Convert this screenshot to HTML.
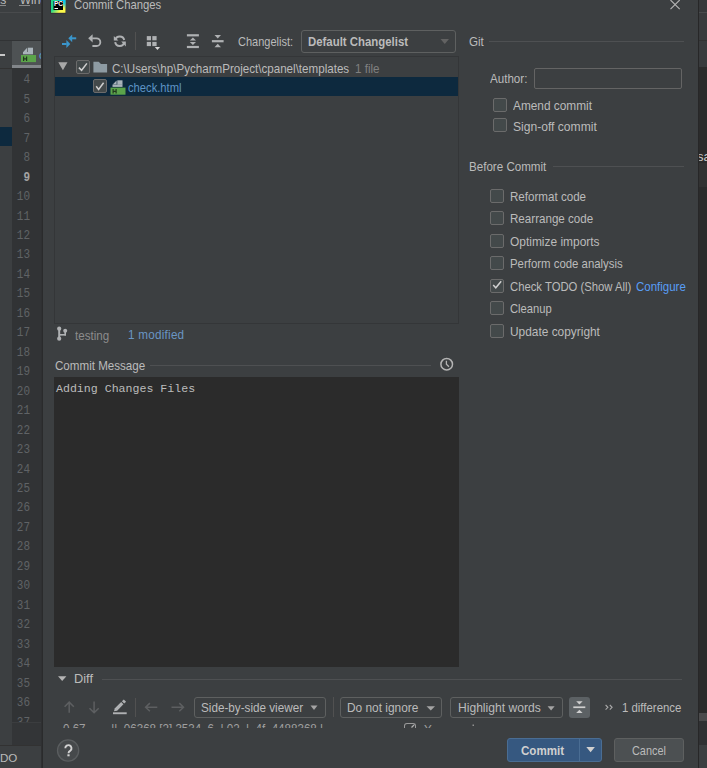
<!DOCTYPE html>
<html><head><meta charset="utf-8">
<style>
*{margin:0;padding:0;box-sizing:border-box}
html,body{width:707px;height:768px;overflow:hidden;background:#2b2b2b}
body{position:relative;font-family:"Liberation Sans",sans-serif;font-size:11.6px;color:#bbbbbb}
.a{position:absolute}
.t{position:absolute;white-space:pre;line-height:14px;font-size:11.6px}
.mono{font-family:"Liberation Mono",monospace}
.cb{position:absolute;width:14px;height:14px;border:1px solid #6b6b6b;border-radius:2px;background:#43494a}
.hl{position:absolute;height:1px;background:#4e5052}
.combo{position:absolute;border:1px solid #5e6060;border-radius:3px}
.ln{position:absolute;left:11px;width:19px;text-align:right;font-family:"Liberation Mono",monospace;font-size:11px;line-height:14px;color:#606366;white-space:pre;transform:scaleY(1.1);transform-origin:0 12px}
</style></head><body>

<!-- ===== IDE background left ===== -->
<div class="a" style="left:0;top:0;width:43px;height:12px;background:#3c3f41"></div>
<div class="a" style="left:0;top:12px;width:43px;height:1px;background:#494b4d"></div>
<div class="a" style="left:0;top:13px;width:43px;height:27px;background:#3c3f41"></div>
<div class="a" style="left:0;top:40px;width:43px;height:1px;background:#313335"></div>
<div class="a" style="left:0;top:41px;width:43px;height:681px;background:#3c3f41"></div>
<!-- tab -->
<div class="a" style="left:12px;top:41px;width:31px;height:27px;background:#4e5254"></div>
<div class="a" style="left:12px;top:64.5px;width:31px;height:3.5px;background:#82868a"></div>
<!-- gutter -->
<div class="a" style="left:12px;top:68px;width:31px;height:654px;background:#313335"></div>
<div class="a" style="left:0;top:127px;width:12px;height:19px;background:#0d293e"></div>
<div class="a" style="left:0;top:68px;width:12px;height:1px;background:#323232"></div>
<div class="a" style="left:0;top:54px;width:5px;height:2px;background:#c8c8c8"></div>

<!-- line numbers -->
<div class="a" style="left:12px;top:68px;width:31px;height:654px;overflow:hidden">
<div style="position:absolute;left:-12px;top:-68px;width:43px;height:800px">
<div class="ln" style="top:73.3px">4</div>
<div class="ln" style="top:92.8px">5</div>
<div class="ln" style="top:112.2px">6</div>
<div class="ln" style="top:131.7px">7</div>
<div class="ln" style="top:151.1px">8</div>
<div class="ln" style="top:170.6px;color:#a4a3a3;font-weight:bold">9</div>
<div class="ln" style="top:190.1px">10</div>
<div class="ln" style="top:209.5px">11</div>
<div class="ln" style="top:229.0px">12</div>
<div class="ln" style="top:248.4px">13</div>
<div class="ln" style="top:267.9px">14</div>
<div class="ln" style="top:287.4px">15</div>
<div class="ln" style="top:306.8px">16</div>
<div class="ln" style="top:326.3px">17</div>
<div class="ln" style="top:345.7px">18</div>
<div class="ln" style="top:365.2px">19</div>
<div class="ln" style="top:384.7px">20</div>
<div class="ln" style="top:404.1px">21</div>
<div class="ln" style="top:423.6px">22</div>
<div class="ln" style="top:443.0px">23</div>
<div class="ln" style="top:462.5px">24</div>
<div class="ln" style="top:482.0px">25</div>
<div class="ln" style="top:501.4px">26</div>
<div class="ln" style="top:520.9px">27</div>
<div class="ln" style="top:540.3px">28</div>
<div class="ln" style="top:559.8px">29</div>
<div class="ln" style="top:579.3px">30</div>
<div class="ln" style="top:598.7px">31</div>
<div class="ln" style="top:618.2px">32</div>
<div class="ln" style="top:637.6px">33</div>
<div class="ln" style="top:657.1px">34</div>
<div class="ln" style="top:676.6px">35</div>
<div class="ln" style="top:696.0px">36</div>
<div class="ln" style="top:715.5px">37</div>
</div></div>
<!-- menu partial text -->
<div class="a" style="left:0;top:0;width:43px;height:12px;overflow:hidden">
<div class="t" style="left:-9px;top:-7.5px;font-size:12px">ols&nbsp;&nbsp;&nbsp;&nbsp;Window</div>
<div class="a" style="left:0px;top:5px;width:6px;height:1px;background:#8a8a8a"></div>
<div class="a" style="left:19px;top:5px;width:11px;height:1px;background:#8a8a8a"></div>
</div>
<!-- tab icon -->
<svg class="a" style="left:0;top:0" width="43" height="70">
<g id="htmlicon">
<polygon points="23.2,52 27.1,47.8 27.1,52" fill="#a9b3ba"/>
<rect x="27.8" y="47.7" width="5.2" height="4.5" fill="#a9b3ba"/>
<rect x="23" y="52" width="10" height="2.3" fill="#a9b3ba"/>
<rect x="21" y="55" width="15" height="7.1" fill="#5ba44a"/>
<path d="M23.6,56.5 V61 M26.6,56.5 V61 M23.6,58.8 H26.6" stroke="#22381f" stroke-width="1.2" fill="none"/>
</g>
</svg>
<div class="a" style="left:39px;top:49px;width:2px;height:12px;overflow:hidden"><div class="t" style="left:0;top:-1px;color:#5a9bd5">c</div></div>

<!-- scroll + status -->
<div class="a" style="left:0;top:722px;width:43px;height:23px;background:#3c3f41"></div>
<div class="a" style="left:12px;top:722px;width:31px;height:23px;background:#333537"></div>
<div class="a" style="left:12px;top:722px;width:31px;height:1px;background:#3b3d3f"></div>
<div class="a" style="left:0;top:745px;width:43px;height:23px;background:#3c3f41"></div>
<div class="a" style="left:0;top:745px;width:43px;height:1px;background:#323232"></div>
<div class="t" style="left:-16px;top:751px;color:#bbbbbb">TODO</div>

<!-- ===== IDE background right ===== -->
<div class="a" style="left:698px;top:0;width:9px;height:12px;background:#37393b"></div>
<div class="a" style="left:698px;top:12px;width:9px;height:1px;background:#494b4d"></div>
<div class="a" style="left:698px;top:13px;width:9px;height:27px;background:#393b3d"></div>
<div class="a" style="left:698px;top:40px;width:9px;height:1px;background:#323232"></div>
<div class="a" style="left:698px;top:41px;width:9px;height:26px;background:#393b3d"></div>
<div class="a" style="left:698px;top:67px;width:9px;height:646px;background:#2b2b2b"></div>
<div class="a" style="left:698px;top:163px;width:9px;height:24px;background:#323232"></div>
<div class="a" style="left:698px;top:148px;width:9px;height:16px;overflow:hidden"><div class="t" style="left:-1px;top:1.5px;font-size:13px;color:#c8c8c8">sa</div></div>
<div class="a" style="left:698px;top:713px;width:9px;height:8px;background:#4b4b4c"></div>
<div class="a" style="left:698px;top:721px;width:9px;height:24px;background:#303133"></div>
<div class="a" style="left:698px;top:745px;width:9px;height:23px;background:#3c3f41"></div>

<!-- ===== Dialog ===== -->
<div class="a" style="left:41px;top:0;width:1px;height:768px;background:#2f3032"></div>
<div id="dlg" class="a" style="left:42px;top:0;width:657px;height:768px;background:#3c3f41;border-left:1px solid #2a2b2c;border-right:1px solid #272728"></div>

<div class="t" style="left:74px;top:-1.96px;font-size:12.1px;transform:scaleX(0.9339);transform-origin:0 0">Commit Changes</div>

<!-- toolbar separators -->
<div class="a" style="left:135px;top:32px;width:1px;height:18px;background:#515151"></div>

<div class="t" style="left:238px;top:34.64px;font-size:12.1px;transform:scaleX(0.9091);transform-origin:0 0">Changelist:</div>
<div class="combo" style="left:301px;top:30px;width:155px;height:23px"></div>
<div class="t" style="left:308px;top:34.77px;font-size:12.1px;font-weight:bold;transform:scaleX(0.9421);transform-origin:0 0">Default Changelist</div>

<div class="t" style="left:469px;top:34.83px;font-size:12.1px;transform:scaleX(0.9587);transform-origin:0 0">Git</div>
<div class="hl" style="left:489px;top:41px;width:195px"></div>

<!-- tree panel -->
<div class="a" style="left:54px;top:56px;width:405px;height:268px;border:1px solid #343638"></div>
<div class="a" style="left:55px;top:77px;width:403px;height:19px;background:#0d293e"></div>
<div class="cb" style="left:76px;top:60px"></div>
<div class="t" style="left:112px;top:61.83px;font-size:12.1px;transform:scaleX(0.9587);transform-origin:0 0">C:\Users\hp\PycharmProject\cpanel\templates</div>
<div class="t" style="left:355px;top:61.83px;color:#808080;font-size:12.1px;transform:scaleX(0.9587);transform-origin:0 0">1 file</div>
<div class="cb" style="left:93px;top:79px"></div>
<div class="t" style="left:128px;top:81.2px;color:#5d93c4;font-size:12.1px;transform:scaleX(0.9256);transform-origin:0 0">check.html</div>

<div class="t" style="left:75px;top:328.83px;color:#8c8c8c;font-size:12.1px;transform:scaleX(0.9587);transform-origin:0 0">testing</div>
<div class="t" style="left:128px;top:328.17px;color:#6a96c4;font-size:12.1px;letter-spacing:0.25px;transform:scaleX(0.9669);transform-origin:0 0">1 modified</div>

<div class="t" style="left:55px;top:358.83px;font-size:12.1px;transform:scaleX(0.9587);transform-origin:0 0">Commit Message</div>
<div class="hl" style="left:150px;top:365px;width:281px"></div>
<div class="a" style="left:54px;top:377px;width:405px;height:290px;background:#2b2b2b"></div>
<div class="t mono" style="left:56px;top:382px;font-size:11.6px;color:#bbbbbb">Adding Changes Files</div>

<div class="t" style="left:74px;top:672.23px;font-size:12.1px;transform:scaleX(1.0579);transform-origin:0 0">Diff</div>
<div class="hl" style="left:102px;top:679px;width:580px"></div>
<div class="a" style="left:135px;top:698px;width:1px;height:19px;background:#515151"></div>
<div class="a" style="left:333px;top:697px;width:1px;height:20px;background:#515151"></div>
<div class="combo" style="left:194px;top:697px;width:132px;height:21px"></div>
<div class="t" style="left:201px;top:700.87px;font-size:12.1px;transform:scaleX(0.9669);transform-origin:0 0">Side-by-side viewer</div>
<div class="combo" style="left:340px;top:697px;width:102px;height:21px"></div>
<div class="t" style="left:347px;top:700.93px;font-size:12.1px;transform:scaleX(0.9835);transform-origin:0 0">Do not ignore</div>
<div class="combo" style="left:450px;top:697px;width:113px;height:21px"></div>
<div class="t" style="left:458px;top:701.00px;font-size:12.1px;transform:scaleX(1.0000);transform-origin:0 0">Highlight words</div>
<div class="a" style="left:569px;top:697px;width:21px;height:21px;background:#5c6164;border-radius:3px"></div>

<div class="t" style="left:622px;top:700.77px;font-size:12.1px;transform:scaleX(0.9421);transform-origin:0 0">1 difference</div>


<div class="a" style="left:55px;top:720px;width:403px;height:8px;overflow:hidden">
<div class="t" style="left:8px;top:1.83px;font-size:12.1px;color:#a0a0a0;transform:scaleX(0.9587);transform-origin:0 0">0&nbsp;67&nbsp;&nbsp;&nbsp;&nbsp;&nbsp;&nbsp;&nbsp;&nbsp;||&nbsp;&nbsp;06368&nbsp;[2]&nbsp;3534&nbsp;&nbsp;6&nbsp;&nbsp;|&nbsp;02&nbsp;&nbsp;|&nbsp;&nbsp;4f&nbsp;&nbsp;4488368&nbsp;|</div>
</div>
<div class="a" style="left:404px;top:723px;width:12px;height:5px;border:1.3px solid #9a9a9a;border-bottom:none;border-radius:3px 3px 0 0;overflow:hidden"></div>
<div class="a" style="left:420px;top:720px;width:20px;height:8px;overflow:hidden"><div class="t" style="left:4px;top:2px;color:#a0a0a0">Y</div></div>

<!-- right column -->
<div class="t" style="left:490px;top:71.83px;font-size:12.1px;transform:scaleX(0.9587);transform-origin:0 0">Author:</div>
<div class="a" style="left:534px;top:68px;width:148px;height:21px;border:1px solid #646464;border-radius:2px"></div>
<div class="cb" style="left:493px;top:98px"></div>
<div class="t" style="left:513px;top:98.92px;font-size:12.1px;transform:scaleX(0.9793);transform-origin:0 0">Amend commit</div>
<div class="cb" style="left:493px;top:118px"></div>
<div class="t" style="left:513px;top:120.00px;font-size:12.1px;transform:scaleX(1.0000);transform-origin:0 0">Sign-off commit</div>

<div class="t" style="left:469px;top:159.83px;font-size:12.1px;transform:scaleX(0.9587);transform-origin:0 0">Before Commit</div>
<div class="hl" style="left:553px;top:166px;width:131px"></div>

<div class="cb" style="left:490px;top:189px"></div><div class="t" style="left:510px;top:189.83px;font-size:12.1px;transform:scaleX(0.9587);transform-origin:0 0">Reformat code</div>
<div class="cb" style="left:490px;top:211px"></div><div class="t" style="left:510px;top:211.83px;font-size:12.1px;transform:scaleX(0.9587);transform-origin:0 0">Rearrange code</div>
<div class="cb" style="left:490px;top:234px"></div><div class="t" style="left:510px;top:234.95px;font-size:12.1px;transform:scaleX(0.9876);transform-origin:0 0">Optimize imports</div>
<div class="cb" style="left:490px;top:256px"></div><div class="t" style="left:510px;top:256.77px;font-size:12.1px;transform:scaleX(0.9421);transform-origin:0 0">Perform code analysis</div>
<div class="cb" style="left:490px;top:279px"></div><div class="t" style="left:510px;top:279.74px;font-size:12.1px;transform:scaleX(0.9339);transform-origin:0 0">Check TODO (Show All)</div>
<div class="t" style="left:636px;top:279.80px;color:#589df6;font-size:12.1px;transform:scaleX(0.9504);transform-origin:0 0">Configure</div>
<div class="cb" style="left:490px;top:301px"></div><div class="t" style="left:510px;top:301.70px;font-size:12.1px;transform:scaleX(0.9256);transform-origin:0 0">Cleanup</div>
<div class="cb" style="left:490px;top:324px"></div><div class="t" style="left:510px;top:324.93px;font-size:12.1px;transform:scaleX(0.9835);transform-origin:0 0">Update copyright</div>

<!-- help + buttons -->


<div class="a" style="left:507px;top:738px;width:95px;height:24px;background:#365880;border:1px solid #4a6d93;border-radius:3px"></div>
<div class="a" style="left:579px;top:739px;width:1px;height:22px;background:#4a6d93"></div>
<div class="t" style="left:521px;top:743.83px;font-weight:bold;font-size:12.1px;color:#d0d0d0;transform:scaleX(0.9587);transform-origin:0 0">Commit</div>
<div class="a" style="left:614px;top:738px;width:70px;height:24px;background:#4c5052;border:1px solid #5e6060;border-radius:3px"></div>
<div class="t" style="left:632px;top:743.60px;font-size:12.1px;transform:scaleX(0.9008);transform-origin:0 0">Cancel</div>


<svg class="a" style="left:0;top:0" width="707" height="768" viewBox="0 0 707 768">
<!-- pycharm logo -->
<defs>
<linearGradient id="pcg" x1="0" y1="0" x2="1" y2="1">
<stop offset="0" stop-color="#21d789"/><stop offset="0.45" stop-color="#21d789"/><stop offset="0.75" stop-color="#fcf84a"/><stop offset="1" stop-color="#fcf84a"/>
</linearGradient>
<linearGradient id="pcg2" x1="0" y1="1" x2="1" y2="0">
<stop offset="0" stop-color="#21d789" stop-opacity="0"/><stop offset="0.6" stop-color="#07c3f2" stop-opacity="0"/><stop offset="0.85" stop-color="#07c3f2"/><stop offset="1" stop-color="#07c3f2"/>
</linearGradient>
</defs>
<rect x="50.5" y="-1.5" width="15.5" height="15" fill="#2a2630"/>
<rect x="51" y="-1" width="14.5" height="13.8" fill="url(#pcg)"/>
<rect x="51" y="-1" width="14.5" height="13.8" fill="url(#pcg2)"/>
<rect x="53.5" y="1" width="9.5" height="9" fill="#000"/>
<text x="54" y="6.3" font-family="Liberation Sans" font-weight="bold" font-size="6.5" fill="#fff">PC</text>
<rect x="54.5" y="8" width="3.5" height="1" fill="#fff"/>
<!-- close X -->
<path d="M670.5,0 L679.7,9.2 M679.7,0 L670.5,9.2" stroke="#b4b4b4" stroke-width="1.1" fill="none"/>

<!-- toolbar: diff arrows -->
<g fill="#3a96cc">
<polygon points="68.3,38.3 72.2,34.4 72.2,42.2"/><rect x="72" y="37.3" width="4.2" height="2"/>
<polygon points="70.3,44 66.4,40.1 66.4,47.9"/><rect x="62" y="43" width="4.6" height="2"/>
</g>
<!-- rollback -->
<g fill="#afb1b3">
<polygon points="88.2,38.3 92.6,34.2 92.6,42.4"/>
</g>
<path d="M92.2,38.3 H96.5 A3.85,3.85 0 0 1 96.5,46 H92.4" stroke="#afb1b3" stroke-width="1.8" fill="none"/>
<!-- refresh -->
<path d="M115.3,40 A4.55,4.55 0 0 1 124.2,40" stroke="#afb1b3" stroke-width="2" fill="none"/>
<path d="M124.2,42.2 A4.55,4.55 0 0 1 115.2,42.2" stroke="#afb1b3" stroke-width="2" fill="none"/>
<polygon points="113.8,35.9 113.8,40.6 118.4,40.6" fill="#afb1b3"/>
<polygon points="125.8,41.6 125.8,46.4 121.2,41.6" fill="#afb1b3"/>
<!-- group -->
<g fill="#afb1b3">
<rect x="146.8" y="36.1" width="4.2" height="4.2"/><rect x="152.3" y="36.1" width="4.3" height="4.2"/>
<rect x="146.8" y="41.9" width="4.2" height="4.2"/><rect x="152.3" y="41.9" width="4.3" height="4.2"/>
</g>
<polygon points="154.8,47 160.1,47 157.45,50" fill="#d8d8d8"/>
<!-- expand all -->
<g fill="#afb1b3">
<rect x="186.9" y="34.2" width="12" height="2.2"/>
<polygon points="189.8,40.5 196,40.5 192.9,37.4"/>
<polygon points="189.8,42 196,42 192.9,45.1"/>
<rect x="186.9" y="45.9" width="12" height="2.2"/>
<!-- collapse all -->
<polygon points="214.5,34.9 221,34.9 217.75,38.5"/>
<rect x="211.9" y="40.1" width="11.7" height="2.2"/>
<polygon points="214.5,47.2 221,47.2 217.75,43.7"/>
</g>
<!-- combo arrow -->
<polygon points="440.5,39 449,39 444.75,44" fill="#626262"/>

<!-- tree -->
<polygon points="58.3,62.2 67.5,62.2 62.9,70.2" fill="#a8a8a8"/>
<path d="M78.9,67.6 L81.6,70.3 L86.9,63.4" stroke="#d0d0d0" stroke-width="1.5" fill="none"/>
<path d="M93.4,61.8 H98.7 L101,64.1 H107.1 V72.5 H93.4 Z" fill="#8e9ba3"/>
<path d="M96.2,86.3 L98.6,89.4 L103.6,82.8" stroke="#d0d0d0" stroke-width="1.5" fill="none"/>
<use href="#htmlicon" transform="translate(89.5,32.6)"/>

<!-- branch -->
<g fill="#afb1b3">
<circle cx="59.2" cy="328.7" r="2.1"/><circle cx="59.2" cy="338.7" r="2.1"/><circle cx="65.2" cy="330.8" r="2"/>
<rect x="58.2" y="328.7" width="2" height="10"/>
<rect x="64.4" y="330.8" width="1.6" height="4.7"/>
<rect x="59.2" y="334" width="6.8" height="1.6"/>
</g>
<!-- clock -->
<circle cx="446.7" cy="364.2" r="5.8" stroke="#b4b4b4" stroke-width="1.5" fill="none"/>
<path d="M446.4,360.8 V364.3 L449,366.7" stroke="#b4b4b4" stroke-width="1.3" fill="none"/>

<!-- diff -->
<polygon points="58,676.2 66.4,676.2 62.2,681" fill="#b4b4b4"/>
<g stroke="#5d5f61" stroke-width="1.5" fill="none">
<path d="M69.2,712.8 V702.3 M64.6,706.7 L69.2,702.1 L73.8,706.7"/>
<path d="M94.1,701.6 V712.2 M89.5,708.2 L94.1,712.8 L98.7,708.2"/>
<path d="M145.8,707.2 H157.3 M149.9,703.1 L145.6,707.2 L149.9,711.3"/>
<path d="M171.5,707.2 H183.3 M179.3,703.1 L183.5,707.2 L179.3,711.3"/>
</g>
<g fill="#afb1b3">
<polygon points="113.9,711.3 114.87,708.37 121.17,702.07 123.43,704.33 117.13,710.63"/>
<polygon points="121.9,701.3 123.8,699.4 126.1,701.7 124.2,703.6"/>
<rect x="113" y="712.3" width="13.7" height="1.9"/>
</g>
<g fill="#a4a4a4">
<polygon points="310.5,705.5 317.5,705.5 314,710"/>
<polygon points="426.5,706.2 435,706.2 430.75,710.6"/>
<polygon points="547.6,706.2 554.6,706.2 551.1,710.6"/>
</g>
<g fill="#cfcfcf">
<polygon points="576.2,701.2 582.6,701.2 579.4,704.6"/>
<rect x="573.3" y="706.4" width="12" height="1.7"/>
<polygon points="576.2,713 582.6,713 579.4,709.8"/>
</g>

<path d="M605.6,705 L607.9,707.3 L605.6,709.6 M609.8,705 L612.1,707.3 L609.8,709.6" stroke="#a8a8a8" stroke-width="1.1" fill="none"/>
<circle cx="68.1" cy="750.45" r="10.6" fill="#46494b" stroke="#5a5d5f" stroke-width="1.3"/>
<path d="M65.3,748.3 A3.1,3.1 0 1 1 70.4,750.6 Q68.5,751.7 68.5,753.2" stroke="#d2d2d2" stroke-width="1.9" fill="none"/>
<rect x="67.4" y="754.3" width="2.2" height="2" fill="#d2d2d2"/>
<path d="M411.5,727.5 L414,725" stroke="#b0b0b0" stroke-width="1.3"/>
<rect x="472.5" y="724.5" width="1.5" height="1.5" fill="#909090"/>
<!-- check todo checkmark -->
<path d="M493.2,285 L495.8,287.8 L501.2,281.2" stroke="#d0d0d0" stroke-width="1.5" fill="none"/>
<!-- commit arrow -->
<polygon points="586.3,747 594.9,747 590.6,752.2" fill="#d0d0d0"/>
</svg>

</body></html>
